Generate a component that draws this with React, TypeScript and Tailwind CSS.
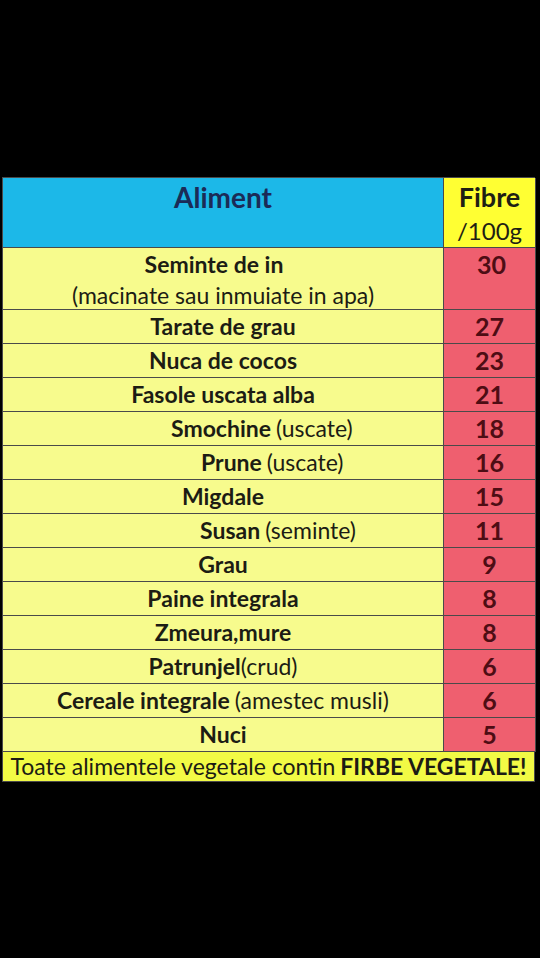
const rows: { name: string; note?: string; value: string; pad?: string }[] = [
  { name: "Tarate de grau", value: "27" },
  { name: "Nuca de cocos", value: "23" },
  { name: "Fasole uscata alba", value: "21" },
  { name: "Smochine", note: "(uscate)", value: "18", pad: "pl-[168px]" },
  { name: "Prune", note: "(uscate)", value: "16", pad: "pl-[198px]" },
  { name: "Migdale", value: "15" },
  { name: "Susan", note: "(seminte)", value: "11", pad: "pl-[197px]" },
  { name: "Grau", value: "9" },
  { name: "Paine integrala", value: "8" },
  { name: "Zmeura,mure", value: "8" },
  { name: "Patrunjel", note: "(crud)", value: "6" },
  { name: "Cereale integrale", note: "(amestec musli)", value: "6" },
  { name: "Nuci", value: "5" },
];

export default function App() {
  return (
    <div className="h-[958px] w-[540px] bg-black pt-[177px] pl-[2px] font-['Lato',sans-serif]">
      <div className="w-[533px] border-l border-t border-[#4a4a4a]">
        <div className="grid grid-cols-[441px_92px]">
          {/* header */}
          <div className="flex h-[70px] items-start justify-center border-r border-b border-[#4a4a4a] bg-[#1cb8e8] pt-[1px]">
            <span className="text-[28px] font-bold leading-[36px] text-[#1b2b57]">Aliment</span>
          </div>
          <div className="flex h-[70px] flex-col items-center border-r border-b border-[#4a4a4a] bg-[#ffff33] pt-[2px] leading-[34px] text-[#1f1f14]">
            <span className="text-[27px] font-bold">Fibre</span>
            <span className="text-[24px] font-normal">/100g</span>
          </div>

          {/* first, two line row */}
          <div className="flex h-[62px] flex-col items-center border-r border-b border-[#4a4a4a] bg-[#f7fb8d] pt-[1px] text-[23px] leading-[31px] text-[#1c1c14]">
            <span className="pr-[18px] font-bold">Seminte de in</span>
            <span className="font-normal">(macinate sau inmuiate in apa)</span>
          </div>
          <div className="flex h-[62px] justify-center border-r border-b border-[#4a4a4a] bg-[#ef5f6f] pt-[1px] pl-[4px] text-[25px] font-bold leading-[31px] text-[#4e0d14]">
            30
          </div>

          {rows.map((r) => (
            <div className="contents" key={r.name}>
              <div
                className={`flex h-[34px] items-center border-r border-b border-[#4a4a4a] bg-[#f7fb8d] text-[23px] text-[#1c1c14] ${
                  r.pad ? `justify-start ${r.pad}` : "justify-center"
                }`}
              >
                <span className="font-bold">{r.name}</span>
                {r.note && (
                  <span className={`font-normal ${r.name === "Patrunjel" ? "" : "ml-[5px]"}`}>
                    {r.note}
                  </span>
                )}
              </div>
              <div className="flex h-[34px] items-center justify-center border-r border-b border-[#4a4a4a] bg-[#ef5f6f] text-[25px] font-bold text-[#4e0d14]">
                {r.value}
              </div>
            </div>
          ))}
        </div>

        {/* footer */}
        <div className="flex h-[30px] items-center justify-center border-r border-b border-[#4a4a4a] bg-[#f2fa45] text-[23px] text-[#1c1c14]">
          <span className="font-normal">Toate alimentele vegetale contin</span>
          <span className="ml-[5px] font-bold">FIRBE VEGETALE!</span>
        </div>
      </div>
    </div>
  );
}
